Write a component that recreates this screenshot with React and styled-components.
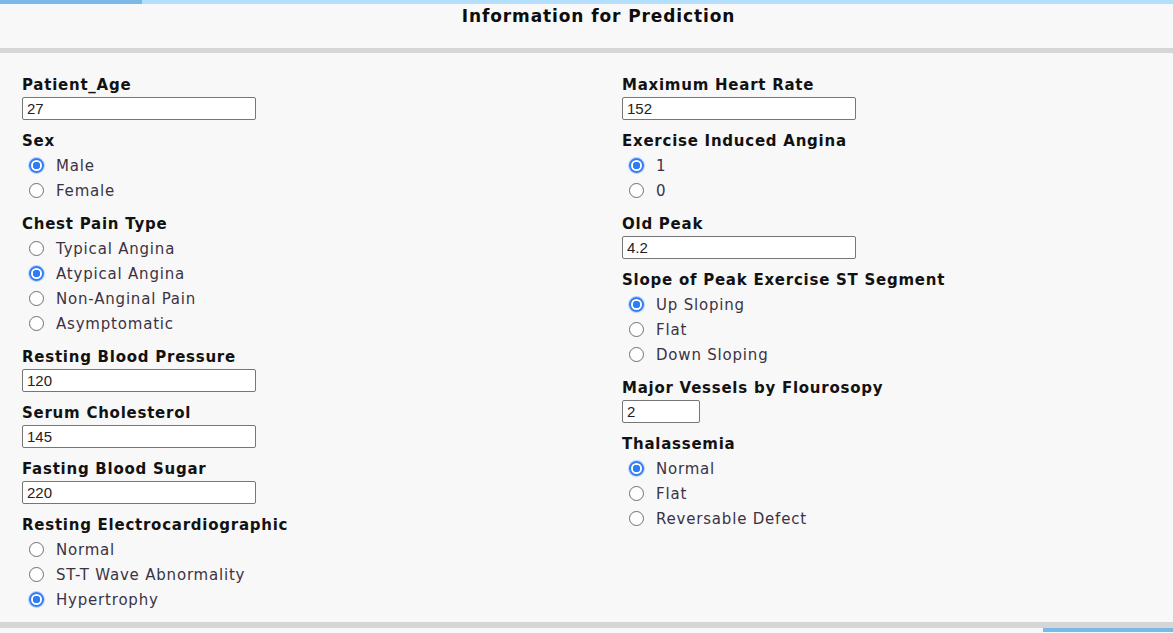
import React from 'react'
import styled, { createGlobalStyle } from 'styled-components'

const GlobalStyle = createGlobalStyle`
  html, body {
    margin: 0;
    padding: 0;
    background: #f8f8f8;
    font-family: "DejaVu Sans", "Open Sans", sans-serif;
  }
`

const leftFields = [
  { label: 'Patient_Age', type: 'text', value: '27' },
  { label: 'Sex', type: 'radio', options: ['Male', 'Female'], checked: 0 },
  { label: 'Chest Pain Type', type: 'radio', options: ['Typical Angina', 'Atypical Angina', 'Non-Anginal Pain', 'Asymptomatic'], checked: 1 },
  { label: 'Resting Blood Pressure', type: 'text', value: '120' },
  { label: 'Serum Cholesterol', type: 'text', value: '145' },
  { label: 'Fasting Blood Sugar', type: 'text', value: '220' },
  { label: 'Resting Electrocardiographic', type: 'radio', options: ['Normal', 'ST-T Wave Abnormality', 'Hypertrophy'], checked: 2 },
]

const rightFields = [
  { label: 'Maximum Heart Rate', type: 'text', value: '152' },
  { label: 'Exercise Induced Angina', type: 'radio', options: ['1', '0'], checked: 0 },
  { label: 'Old Peak', type: 'text', value: '4.2' },
  { label: 'Slope of Peak Exercise ST Segment', type: 'radio', options: ['Up Sloping', 'Flat', 'Down Sloping'], checked: 0 },
  { label: 'Major Vessels by Flourosopy', type: 'text', value: '2', small: true },
  { label: 'Thalassemia', type: 'radio', options: ['Normal', 'Flat', 'Reversable Defect'], checked: 0 },
]

let Field = ({ field, name }) => {
  if (field.type === 'text') {
    return (
      <Group>
        <Label>{field.label}</Label>
        <TextInput type="text" defaultValue={field.value} small={field.small ? 1 : 0} />
      </Group>
    )
  }
  return (
    <Group>
      <Label>{field.label}</Label>
      <Options>
        {field.options.map((opt, i) => (
          <RadioRow key={opt}>
            <Radio type="radio" name={name} defaultChecked={i === field.checked} />
            <RadioText>{opt}</RadioText>
          </RadioRow>
        ))}
      </Options>
    </Group>
  )
}

let App = () => {
  return (
    <Page>
      <GlobalStyle />
      <Strip>
        <StripSegment dark width="142px" />
        <StripSegment />
      </Strip>
      <Header>
        <Title>Information for Prediction</Title>
      </Header>
      <Divider />
      <Form>
        <Column>
          {leftFields.map((f, i) => <Field key={f.label} field={f} name={'l' + i} />)}
        </Column>
        <Column>
          {rightFields.map((f, i) => <Field key={f.label} field={f} name={'r' + i} />)}
        </Column>
      </Form>
      <Divider thick />
      <Strip>
        <StripSegment light />
        <StripSegment dark width="130px" />
      </Strip>
    </Page>
  )
}

export default App

const Page = styled.div`
  min-height: 633px;
  background: #f8f8f8;
`

const Strip = styled.div`
  display: flex;
  height: 4px;
`

const StripSegment = styled.div`
  flex: ${p => (p.width ? `0 0 ${p.width}` : '1')};
  background: ${p => (p.dark ? '#7bb9e8' : p.light ? '#f8f8f8' : '#b3dffd')};
`

const Header = styled.header`
  height: 44px;
  display: flex;
  justify-content: center;
  padding-left: 24px;
`

const Title = styled.h1`
  margin: 2px 0 0;
  font-size: 17px;
  line-height: 20px;
  font-weight: 700;
  color: #0d0d0d;
  letter-spacing: 0.9px;
`

const Divider = styled.div`
  height: ${p => (p.thick ? '6px' : '5px')};
  background: #d6d6d6;
`

const Form = styled.form`
  display: grid;
  grid-template-columns: 600px 1fr;
  padding: 22px 0 10px 22px;
`

const Column = styled.div`
  display: flex;
  flex-direction: column;
  gap: 11px;
`

const Group = styled.div`
  display: flex;
  flex-direction: column;
  align-items: flex-start;
`

const Label = styled.label`
  font-size: 15px;
  line-height: 20px;
  font-weight: 700;
  color: #121212;
  letter-spacing: 0.75px;
`

const TextInput = styled.input`
  box-sizing: border-box;
  margin-top: 2px;
  width: ${p => (p.small ? '78px' : '234px')};
  height: 23px;
  padding: 0 4px;
  border: 1px solid #767676;
  border-radius: 2px;
  background: #fff;
  font-family: "Liberation Sans", sans-serif;
  font-size: 15px;
  color: #222;
  outline: none;
`

const Options = styled.div`
  margin-top: 2px;
  display: flex;
  flex-direction: column;
`

const RadioRow = styled.div`
  height: 25px;
  display: flex;
  align-items: center;
  padding-left: 7px;
  gap: 12px;
`

const Radio = styled.input`
  appearance: none;
  box-sizing: border-box;
  margin: 0;
  width: 15px;
  height: 15px;
  border-radius: 50%;
  border: 1px solid #6f6f6f;
  background: #fff;
  &:checked {
    border: 2px solid #2f7cf6;
    background: radial-gradient(circle, #2f7cf6 0 3.5px, #fff 4px);
    box-shadow: 0 0 0 1px #b9d3fb;
  }
`

const RadioText = styled.span`
  font-size: 15px;
  color: #3b3344;
  letter-spacing: 0.8px;
`
